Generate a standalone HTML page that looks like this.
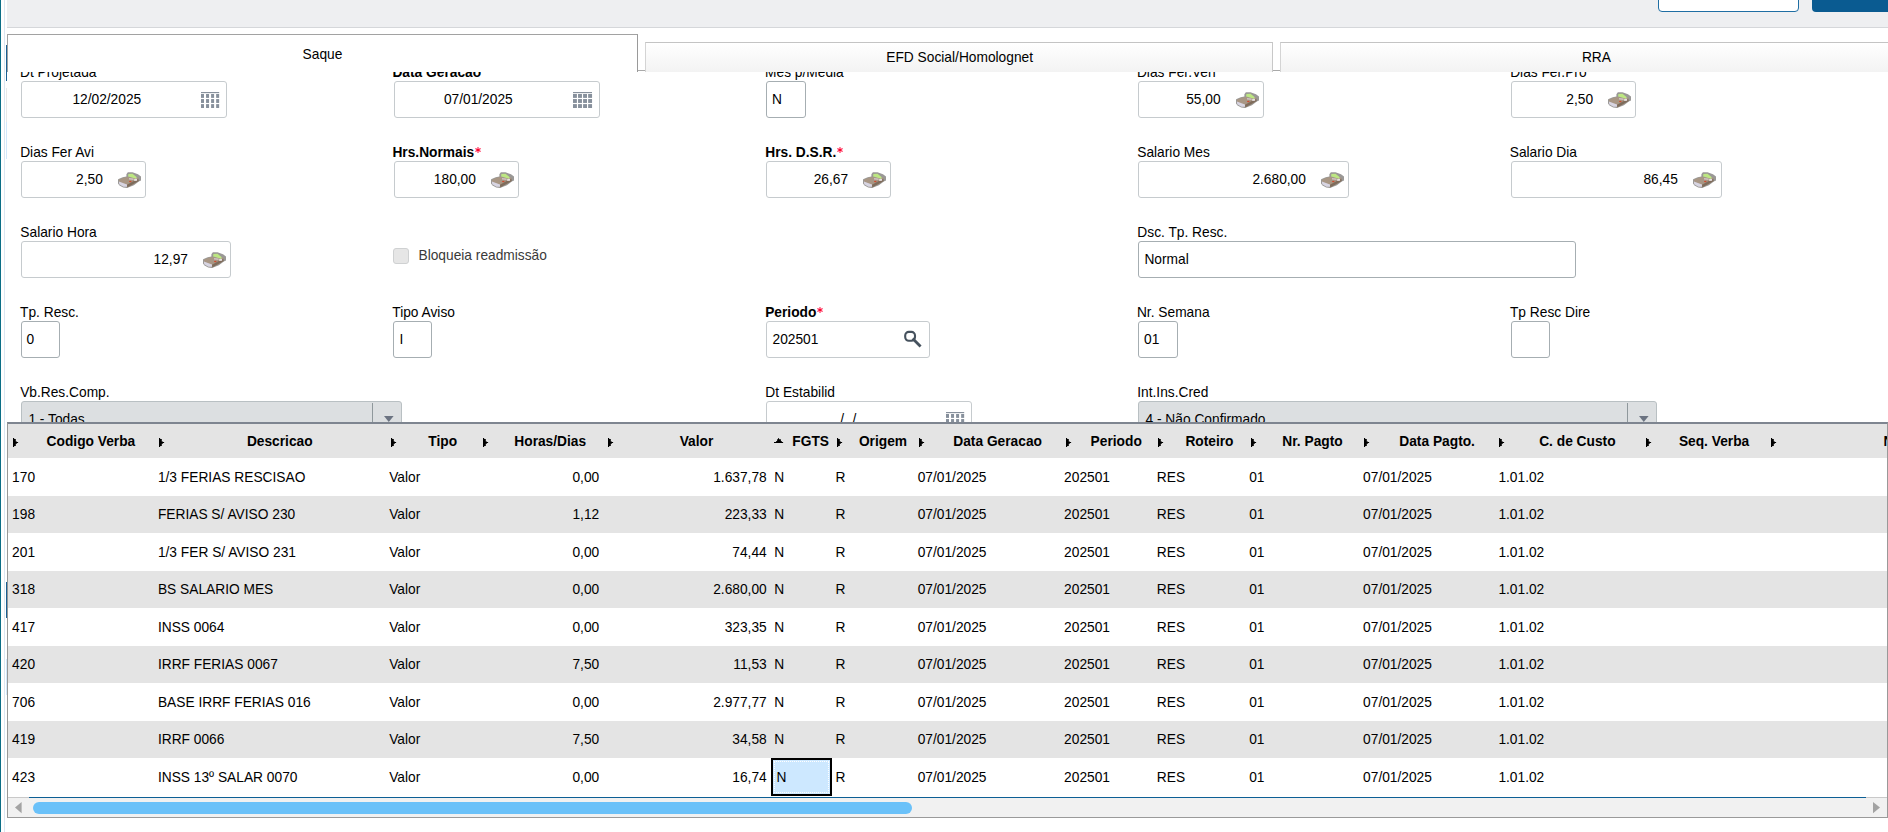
<!DOCTYPE html><html><head><meta charset="utf-8"><style>
html,body{margin:0;padding:0;width:1888px;height:832px;overflow:hidden;background:#fff;position:relative}
body{font-family:"Liberation Sans",sans-serif;font-size:13.75px;color:#000}
.t{position:absolute;white-space:nowrap;line-height:16px;font-size:13.75px}
</style></head><body>
<div style="position:absolute;left:0.00px;top:0.00px;width:1.30px;height:832.00px;box-sizing:border-box;background:#0b6e86"></div>
<div style="position:absolute;left:3.90px;top:0.00px;width:1.20px;height:832.00px;box-sizing:border-box;background:#dbe6f1"></div>
<div style="position:absolute;left:5.80px;top:88.00px;width:1.20px;height:34.00px;box-sizing:border-box;background:#e8e8e8"></div>
<div style="position:absolute;left:5.80px;top:122.00px;width:1.20px;height:36.60px;box-sizing:border-box;background:#d3e8fb"></div>
<div style="position:absolute;left:5.80px;top:582.40px;width:1.20px;height:35.40px;box-sizing:border-box;background:#1b5f93"></div>
<div style="position:absolute;left:5.80px;top:659.00px;width:1.20px;height:36.00px;box-sizing:border-box;background:#d3e8fb"></div>
<div class="t" style="top:65.00px;left:20.05px;">Dt Projetada</div>
<div style="position:absolute;left:21.10px;top:81.20px;width:206.40px;height:36.50px;box-sizing:border-box;border:1px solid #c6cbce;border-radius:3px;background:#fff"></div>
<div class="t" style="top:91.80px;left:72.40px;">12/02/2025</div>
<svg width="20" height="17" viewBox="0 0 20 17" style="position:absolute;left:200.90px;top:91.90px"><rect x="0" y="0" width="18.2" height="1.15" fill="#87909c"/><rect x="0.00" y="2.00" width="3.0" height="3.9" fill="#87909c"/><rect x="5.05" y="2.00" width="3.0" height="3.9" fill="#87909c"/><rect x="10.10" y="2.00" width="3.0" height="3.9" fill="#87909c"/><rect x="15.15" y="2.00" width="3.0" height="3.9" fill="#87909c"/><rect x="0.00" y="7.05" width="3.0" height="3.9" fill="#87909c"/><rect x="5.05" y="7.05" width="3.0" height="3.9" fill="#87909c"/><rect x="10.10" y="7.05" width="3.0" height="3.9" fill="#87909c"/><rect x="15.15" y="7.05" width="3.0" height="3.9" fill="#87909c"/><rect x="0.00" y="12.10" width="3.0" height="3.9" fill="#87909c"/><rect x="5.05" y="12.10" width="3.0" height="3.9" fill="#87909c"/><rect x="10.10" y="12.10" width="3.0" height="3.9" fill="#87909c"/><rect x="15.15" y="12.10" width="3.0" height="3.9" fill="#87909c"/></svg>
<div class="t" style="top:65.00px;left:392.45px;font-weight:bold;">Data Geracao</div>
<div style="position:absolute;left:393.50px;top:81.20px;width:206.50px;height:36.50px;box-sizing:border-box;border:1px solid #c6cbce;border-radius:3px;background:#fff"></div>
<div class="t" style="top:91.80px;left:443.90px;">07/01/2025</div>
<svg width="20" height="17" viewBox="0 0 20 17" style="position:absolute;left:572.90px;top:91.90px"><rect x="0" y="0" width="19.0" height="1.15" fill="#87909c"/><rect x="0.00" y="2.00" width="3.9" height="3.9" fill="#87909c"/><rect x="5.05" y="2.00" width="3.9" height="3.9" fill="#87909c"/><rect x="10.10" y="2.00" width="3.9" height="3.9" fill="#87909c"/><rect x="15.15" y="2.00" width="3.9" height="3.9" fill="#87909c"/><rect x="0.00" y="7.05" width="3.9" height="3.9" fill="#87909c"/><rect x="5.05" y="7.05" width="3.9" height="3.9" fill="#87909c"/><rect x="10.10" y="7.05" width="3.9" height="3.9" fill="#87909c"/><rect x="15.15" y="7.05" width="3.9" height="3.9" fill="#87909c"/><rect x="0.00" y="12.10" width="3.9" height="3.9" fill="#87909c"/><rect x="5.05" y="12.10" width="3.9" height="3.9" fill="#87909c"/><rect x="10.10" y="12.10" width="3.9" height="3.9" fill="#87909c"/><rect x="15.15" y="12.10" width="3.9" height="3.9" fill="#87909c"/></svg>
<div class="t" style="top:65.00px;left:765.05px;">Mes p/Media</div>
<div style="position:absolute;left:766.10px;top:81.20px;width:39.90px;height:36.50px;box-sizing:border-box;border:1.25px solid #a6aeb2;border-radius:3px;background:#fff"></div>
<div class="t" style="top:91.80px;left:771.90px;">N</div>
<div class="t" style="top:65.00px;left:1136.95px;">Dias Fer.Ven</div>
<div style="position:absolute;left:1138.00px;top:81.20px;width:126.00px;height:36.50px;box-sizing:border-box;border:1px solid #c6cbce;border-radius:3px;background:#fff"></div>
<div class="t" style="top:91.80px;right:667.40px;">55,00</div>
<div style="position:absolute;left:1235.80px;top:92.00px;width:23px;height:16px"><svg width="23" height="16" viewBox="0 0 23 16"><path d="M0 7.5 L0 11.6 L1.5 13.6 L5.2 15.6 L9 15.9 L15.9 13.3 L20.8 9.6 L23 8.4 L23 4.4 L20 2.3 L14.5 0.3 L9.85 0.3 L8.4 2.35 L8.4 4.4 L4.7 5.2 L0.6 7 Z" fill="#9a9896"/><path d="M0.9 7.8 L5 6 L9.5 4.8 L12 5.5 L20.5 5.5 L20.2 9 L15.5 12.3 L9 14.8 L1.2 11.3 Z" fill="#a89684"/><path d="M0.9 9.6 L9 12.4 L9 14.8 L5.5 14.8 L1.2 12.2 Z" fill="#d8d5e2"/><path d="M9 12.7 L20.2 6.4 L20.8 9 L9.3 15.6 Z" fill="#7f6c5b"/><path d="M11 6.1 L15.6 6.6 L15.6 8.1 L11 7.6 Z" fill="#cfc3c3"/><path d="M16.2 7 L19.1 6.8 L19.1 8.7 L16.2 9 Z" fill="#e6dfe0"/><path d="M10.4 2.06 L14.5 1.8 L18.8 5.2 L17.9 6.7 L12.2 5 L10.1 4.4 Z" fill="#bde782"/><ellipse cx="12.3" cy="9.5" rx="1.3" ry="0.65" fill="#cf4a2f"/></svg></div>
<div class="t" style="top:65.00px;left:1510.15px;">Dias Fer.Pro</div>
<div style="position:absolute;left:1511.20px;top:81.20px;width:124.80px;height:36.50px;box-sizing:border-box;border:1px solid #c6cbce;border-radius:3px;background:#fff"></div>
<div class="t" style="top:91.80px;right:294.90px;">2,50</div>
<div style="position:absolute;left:1608.30px;top:92.00px;width:23px;height:16px"><svg width="23" height="16" viewBox="0 0 23 16"><path d="M0 7.5 L0 11.6 L1.5 13.6 L5.2 15.6 L9 15.9 L15.9 13.3 L20.8 9.6 L23 8.4 L23 4.4 L20 2.3 L14.5 0.3 L9.85 0.3 L8.4 2.35 L8.4 4.4 L4.7 5.2 L0.6 7 Z" fill="#9a9896"/><path d="M0.9 7.8 L5 6 L9.5 4.8 L12 5.5 L20.5 5.5 L20.2 9 L15.5 12.3 L9 14.8 L1.2 11.3 Z" fill="#a89684"/><path d="M0.9 9.6 L9 12.4 L9 14.8 L5.5 14.8 L1.2 12.2 Z" fill="#d8d5e2"/><path d="M9 12.7 L20.2 6.4 L20.8 9 L9.3 15.6 Z" fill="#7f6c5b"/><path d="M11 6.1 L15.6 6.6 L15.6 8.1 L11 7.6 Z" fill="#cfc3c3"/><path d="M16.2 7 L19.1 6.8 L19.1 8.7 L16.2 9 Z" fill="#e6dfe0"/><path d="M10.4 2.06 L14.5 1.8 L18.8 5.2 L17.9 6.7 L12.2 5 L10.1 4.4 Z" fill="#bde782"/><ellipse cx="12.3" cy="9.5" rx="1.3" ry="0.65" fill="#cf4a2f"/></svg></div>
<div class="t" style="top:145.10px;left:20.15px;">Dias Fer Avi</div>
<div style="position:absolute;left:21.20px;top:161.30px;width:125.20px;height:36.50px;box-sizing:border-box;border:1px solid #c6cbce;border-radius:3px;background:#fff"></div>
<div class="t" style="top:171.90px;right:1785.20px;">2,50</div>
<div style="position:absolute;left:118.00px;top:172.10px;width:23px;height:16px"><svg width="23" height="16" viewBox="0 0 23 16"><path d="M0 7.5 L0 11.6 L1.5 13.6 L5.2 15.6 L9 15.9 L15.9 13.3 L20.8 9.6 L23 8.4 L23 4.4 L20 2.3 L14.5 0.3 L9.85 0.3 L8.4 2.35 L8.4 4.4 L4.7 5.2 L0.6 7 Z" fill="#9a9896"/><path d="M0.9 7.8 L5 6 L9.5 4.8 L12 5.5 L20.5 5.5 L20.2 9 L15.5 12.3 L9 14.8 L1.2 11.3 Z" fill="#a89684"/><path d="M0.9 9.6 L9 12.4 L9 14.8 L5.5 14.8 L1.2 12.2 Z" fill="#d8d5e2"/><path d="M9 12.7 L20.2 6.4 L20.8 9 L9.3 15.6 Z" fill="#7f6c5b"/><path d="M11 6.1 L15.6 6.6 L15.6 8.1 L11 7.6 Z" fill="#cfc3c3"/><path d="M16.2 7 L19.1 6.8 L19.1 8.7 L16.2 9 Z" fill="#e6dfe0"/><path d="M10.4 2.06 L14.5 1.8 L18.8 5.2 L17.9 6.7 L12.2 5 L10.1 4.4 Z" fill="#bde782"/><ellipse cx="12.3" cy="9.5" rx="1.3" ry="0.65" fill="#cf4a2f"/></svg></div>
<div class="t" style="top:145.10px;left:392.45px;font-weight:bold;">Hrs.Normais</div>
<svg width="10" height="10" viewBox="-5 -5 10 10" style="position:absolute;left:472.90px;top:145.40px"><g stroke="#ff1848" stroke-width="1.1" stroke-linecap="round"><path d="M0 -2.45 L0 2.45"/><path d="M2.2 -1.3 L-2.2 1.3"/><path d="M2.2 1.3 L-2.2 -1.3"/></g><circle r="1" fill="#ff0022"/></svg>
<div style="position:absolute;left:393.50px;top:161.30px;width:125.10px;height:36.50px;box-sizing:border-box;border:1px solid #c6cbce;border-radius:3px;background:#fff"></div>
<div class="t" style="top:171.90px;right:1412.10px;">180,00</div>
<div style="position:absolute;left:491.10px;top:172.10px;width:23px;height:16px"><svg width="23" height="16" viewBox="0 0 23 16"><path d="M0 7.5 L0 11.6 L1.5 13.6 L5.2 15.6 L9 15.9 L15.9 13.3 L20.8 9.6 L23 8.4 L23 4.4 L20 2.3 L14.5 0.3 L9.85 0.3 L8.4 2.35 L8.4 4.4 L4.7 5.2 L0.6 7 Z" fill="#9a9896"/><path d="M0.9 7.8 L5 6 L9.5 4.8 L12 5.5 L20.5 5.5 L20.2 9 L15.5 12.3 L9 14.8 L1.2 11.3 Z" fill="#a89684"/><path d="M0.9 9.6 L9 12.4 L9 14.8 L5.5 14.8 L1.2 12.2 Z" fill="#d8d5e2"/><path d="M9 12.7 L20.2 6.4 L20.8 9 L9.3 15.6 Z" fill="#7f6c5b"/><path d="M11 6.1 L15.6 6.6 L15.6 8.1 L11 7.6 Z" fill="#cfc3c3"/><path d="M16.2 7 L19.1 6.8 L19.1 8.7 L16.2 9 Z" fill="#e6dfe0"/><path d="M10.4 2.06 L14.5 1.8 L18.8 5.2 L17.9 6.7 L12.2 5 L10.1 4.4 Z" fill="#bde782"/><ellipse cx="12.3" cy="9.5" rx="1.3" ry="0.65" fill="#cf4a2f"/></svg></div>
<div class="t" style="top:145.10px;left:765.25px;font-weight:bold;">Hrs. D.S.R.</div>
<svg width="10" height="10" viewBox="-5 -5 10 10" style="position:absolute;left:835.10px;top:145.20px"><g stroke="#ff1848" stroke-width="1.1" stroke-linecap="round"><path d="M0 -2.45 L0 2.45"/><path d="M2.2 -1.3 L-2.2 1.3"/><path d="M2.2 1.3 L-2.2 -1.3"/></g><circle r="1" fill="#ff0022"/></svg>
<div style="position:absolute;left:766.30px;top:161.30px;width:125.00px;height:36.50px;box-sizing:border-box;border:1px solid #c6cbce;border-radius:3px;background:#fff"></div>
<div class="t" style="top:171.90px;right:1039.90px;">26,67</div>
<div style="position:absolute;left:863.30px;top:172.10px;width:23px;height:16px"><svg width="23" height="16" viewBox="0 0 23 16"><path d="M0 7.5 L0 11.6 L1.5 13.6 L5.2 15.6 L9 15.9 L15.9 13.3 L20.8 9.6 L23 8.4 L23 4.4 L20 2.3 L14.5 0.3 L9.85 0.3 L8.4 2.35 L8.4 4.4 L4.7 5.2 L0.6 7 Z" fill="#9a9896"/><path d="M0.9 7.8 L5 6 L9.5 4.8 L12 5.5 L20.5 5.5 L20.2 9 L15.5 12.3 L9 14.8 L1.2 11.3 Z" fill="#a89684"/><path d="M0.9 9.6 L9 12.4 L9 14.8 L5.5 14.8 L1.2 12.2 Z" fill="#d8d5e2"/><path d="M9 12.7 L20.2 6.4 L20.8 9 L9.3 15.6 Z" fill="#7f6c5b"/><path d="M11 6.1 L15.6 6.6 L15.6 8.1 L11 7.6 Z" fill="#cfc3c3"/><path d="M16.2 7 L19.1 6.8 L19.1 8.7 L16.2 9 Z" fill="#e6dfe0"/><path d="M10.4 2.06 L14.5 1.8 L18.8 5.2 L17.9 6.7 L12.2 5 L10.1 4.4 Z" fill="#bde782"/><ellipse cx="12.3" cy="9.5" rx="1.3" ry="0.65" fill="#cf4a2f"/></svg></div>
<div class="t" style="top:145.10px;left:1137.25px;">Salario Mes</div>
<div style="position:absolute;left:1138.30px;top:161.30px;width:210.70px;height:36.50px;box-sizing:border-box;border:1px solid #c6cbce;border-radius:3px;background:#fff"></div>
<div class="t" style="top:171.90px;right:582.10px;">2.680,00</div>
<div style="position:absolute;left:1321.10px;top:172.10px;width:23px;height:16px"><svg width="23" height="16" viewBox="0 0 23 16"><path d="M0 7.5 L0 11.6 L1.5 13.6 L5.2 15.6 L9 15.9 L15.9 13.3 L20.8 9.6 L23 8.4 L23 4.4 L20 2.3 L14.5 0.3 L9.85 0.3 L8.4 2.35 L8.4 4.4 L4.7 5.2 L0.6 7 Z" fill="#9a9896"/><path d="M0.9 7.8 L5 6 L9.5 4.8 L12 5.5 L20.5 5.5 L20.2 9 L15.5 12.3 L9 14.8 L1.2 11.3 Z" fill="#a89684"/><path d="M0.9 9.6 L9 12.4 L9 14.8 L5.5 14.8 L1.2 12.2 Z" fill="#d8d5e2"/><path d="M9 12.7 L20.2 6.4 L20.8 9 L9.3 15.6 Z" fill="#7f6c5b"/><path d="M11 6.1 L15.6 6.6 L15.6 8.1 L11 7.6 Z" fill="#cfc3c3"/><path d="M16.2 7 L19.1 6.8 L19.1 8.7 L16.2 9 Z" fill="#e6dfe0"/><path d="M10.4 2.06 L14.5 1.8 L18.8 5.2 L17.9 6.7 L12.2 5 L10.1 4.4 Z" fill="#bde782"/><ellipse cx="12.3" cy="9.5" rx="1.3" ry="0.65" fill="#cf4a2f"/></svg></div>
<div class="t" style="top:145.10px;left:1509.75px;">Salario Dia</div>
<div style="position:absolute;left:1510.80px;top:161.30px;width:211.00px;height:36.50px;box-sizing:border-box;border:1px solid #c6cbce;border-radius:3px;background:#fff"></div>
<div class="t" style="top:171.90px;right:210.20px;">86,45</div>
<div style="position:absolute;left:1693.00px;top:172.10px;width:23px;height:16px"><svg width="23" height="16" viewBox="0 0 23 16"><path d="M0 7.5 L0 11.6 L1.5 13.6 L5.2 15.6 L9 15.9 L15.9 13.3 L20.8 9.6 L23 8.4 L23 4.4 L20 2.3 L14.5 0.3 L9.85 0.3 L8.4 2.35 L8.4 4.4 L4.7 5.2 L0.6 7 Z" fill="#9a9896"/><path d="M0.9 7.8 L5 6 L9.5 4.8 L12 5.5 L20.5 5.5 L20.2 9 L15.5 12.3 L9 14.8 L1.2 11.3 Z" fill="#a89684"/><path d="M0.9 9.6 L9 12.4 L9 14.8 L5.5 14.8 L1.2 12.2 Z" fill="#d8d5e2"/><path d="M9 12.7 L20.2 6.4 L20.8 9 L9.3 15.6 Z" fill="#7f6c5b"/><path d="M11 6.1 L15.6 6.6 L15.6 8.1 L11 7.6 Z" fill="#cfc3c3"/><path d="M16.2 7 L19.1 6.8 L19.1 8.7 L16.2 9 Z" fill="#e6dfe0"/><path d="M10.4 2.06 L14.5 1.8 L18.8 5.2 L17.9 6.7 L12.2 5 L10.1 4.4 Z" fill="#bde782"/><ellipse cx="12.3" cy="9.5" rx="1.3" ry="0.65" fill="#cf4a2f"/></svg></div>
<div class="t" style="top:225.10px;left:20.35px;">Salario Hora</div>
<div style="position:absolute;left:21.40px;top:241.30px;width:209.70px;height:36.50px;box-sizing:border-box;border:1px solid #c6cbce;border-radius:3px;background:#fff"></div>
<div class="t" style="top:251.90px;right:1700.00px;">12,97</div>
<div style="position:absolute;left:203.20px;top:252.10px;width:23px;height:16px"><svg width="23" height="16" viewBox="0 0 23 16"><path d="M0 7.5 L0 11.6 L1.5 13.6 L5.2 15.6 L9 15.9 L15.9 13.3 L20.8 9.6 L23 8.4 L23 4.4 L20 2.3 L14.5 0.3 L9.85 0.3 L8.4 2.35 L8.4 4.4 L4.7 5.2 L0.6 7 Z" fill="#9a9896"/><path d="M0.9 7.8 L5 6 L9.5 4.8 L12 5.5 L20.5 5.5 L20.2 9 L15.5 12.3 L9 14.8 L1.2 11.3 Z" fill="#a89684"/><path d="M0.9 9.6 L9 12.4 L9 14.8 L5.5 14.8 L1.2 12.2 Z" fill="#d8d5e2"/><path d="M9 12.7 L20.2 6.4 L20.8 9 L9.3 15.6 Z" fill="#7f6c5b"/><path d="M11 6.1 L15.6 6.6 L15.6 8.1 L11 7.6 Z" fill="#cfc3c3"/><path d="M16.2 7 L19.1 6.8 L19.1 8.7 L16.2 9 Z" fill="#e6dfe0"/><path d="M10.4 2.06 L14.5 1.8 L18.8 5.2 L17.9 6.7 L12.2 5 L10.1 4.4 Z" fill="#bde782"/><ellipse cx="12.3" cy="9.5" rx="1.3" ry="0.65" fill="#cf4a2f"/></svg></div>
<div style="position:absolute;left:393.20px;top:248.20px;width:15.80px;height:15.80px;box-sizing:border-box;border:1px solid #cfd1d2;border-radius:3px;background:#e6e6e6"></div>
<div class="t" style="top:248.00px;left:418.50px;color:#3a3a3a;">Bloqueia readmissão</div>
<div class="t" style="top:225.10px;left:1137.35px;">Dsc. Tp. Resc.</div>
<div style="position:absolute;left:1138.40px;top:241.30px;width:437.40px;height:36.50px;box-sizing:border-box;border:1.25px solid #a6aeb2;border-radius:3px;background:#fff"></div>
<div class="t" style="top:251.90px;left:1144.40px;">Normal</div>
<div class="t" style="top:305.10px;left:20.05px;">Tp. Resc.</div>
<div style="position:absolute;left:21.10px;top:321.30px;width:39.10px;height:36.50px;box-sizing:border-box;border:1.25px solid #a6aeb2;border-radius:3px;background:#fff"></div>
<div class="t" style="top:331.90px;left:26.60px;">0</div>
<div class="t" style="top:305.10px;left:392.25px;">Tipo Aviso</div>
<div style="position:absolute;left:393.30px;top:321.30px;width:39.20px;height:36.50px;box-sizing:border-box;border:1.25px solid #a6aeb2;border-radius:3px;background:#fff"></div>
<div class="t" style="top:331.90px;left:399.50px;">I</div>
<div class="t" style="top:305.10px;left:765.15px;font-weight:bold;">Periodo</div>
<svg width="10" height="10" viewBox="-5 -5 10 10" style="position:absolute;left:815.20px;top:305.10px"><g stroke="#ff1848" stroke-width="1.1" stroke-linecap="round"><path d="M0 -2.45 L0 2.45"/><path d="M2.2 -1.3 L-2.2 1.3"/><path d="M2.2 1.3 L-2.2 -1.3"/></g><circle r="1" fill="#ff0022"/></svg>
<div style="position:absolute;left:766.20px;top:321.30px;width:163.70px;height:36.50px;box-sizing:border-box;border:1px solid #c6cbce;border-radius:3px;background:#fff"></div>
<div class="t" style="top:331.90px;left:772.50px;">202501</div>
<svg width="26" height="26" viewBox="0 0 26 26" style="position:absolute;left:900px;top:326px"><rect x="5.2" y="5.9" width="9.8" height="8.8" rx="3.6" fill="none" stroke="#46525e" stroke-width="2.1"/><path d="M13.6 13.4 L19.6 19.5" stroke="#46525e" stroke-width="2.8" stroke-linecap="square"/></svg>
<div class="t" style="top:305.10px;left:1136.95px;">Nr. Semana</div>
<div style="position:absolute;left:1138.00px;top:321.30px;width:39.50px;height:36.50px;box-sizing:border-box;border:1.25px solid #a6aeb2;border-radius:3px;background:#fff"></div>
<div class="t" style="top:331.90px;left:1144.00px;">01</div>
<div class="t" style="top:305.10px;left:1509.95px;">Tp Resc Dire</div>
<div style="position:absolute;left:1511.00px;top:321.30px;width:39.00px;height:36.50px;box-sizing:border-box;border:1.25px solid #a6aeb2;border-radius:3px;background:#fff"></div>
<div class="t" style="top:385.20px;left:20.15px;">Vb.Res.Comp.</div>
<div style="position:absolute;left:21.20px;top:401.40px;width:380.50px;height:36.50px;box-sizing:border-box;border:1.25px solid #b9c0c3;border-radius:3px;background:#dcdfe1"></div>
<div style="position:absolute;left:372.00px;top:403.40px;width:1.25px;height:34.50px;box-sizing:border-box;background:#8f989c"></div>
<div class="t" style="top:412.00px;left:28.40px;">1 - Todas</div>
<svg width="10" height="6" style="position:absolute;left:384.20px;top:416.20px"><path d="M0 0 L9.6 0 L4.8 6 Z" fill="#6b7381"/></svg>
<div class="t" style="top:385.20px;left:765.35px;">Dt Estabilid</div>
<div style="position:absolute;left:766.40px;top:401.40px;width:205.70px;height:36.50px;box-sizing:border-box;border:1px solid #c6cbce;border-radius:3px;background:#fff"></div>
<svg width="20" height="17" viewBox="0 0 20 17" style="position:absolute;left:945.90px;top:412.10px"><rect x="0" y="0" width="18.2" height="1.15" fill="#87909c"/><rect x="0.00" y="2.00" width="3.0" height="3.9" fill="#87909c"/><rect x="5.05" y="2.00" width="3.0" height="3.9" fill="#87909c"/><rect x="10.10" y="2.00" width="3.0" height="3.9" fill="#87909c"/><rect x="15.15" y="2.00" width="3.0" height="3.9" fill="#87909c"/><rect x="0.00" y="7.05" width="3.0" height="3.9" fill="#87909c"/><rect x="5.05" y="7.05" width="3.0" height="3.9" fill="#87909c"/><rect x="10.10" y="7.05" width="3.0" height="3.9" fill="#87909c"/><rect x="15.15" y="7.05" width="3.0" height="3.9" fill="#87909c"/><rect x="0.00" y="12.10" width="3.0" height="3.9" fill="#87909c"/><rect x="5.05" y="12.10" width="3.0" height="3.9" fill="#87909c"/><rect x="10.10" y="12.10" width="3.0" height="3.9" fill="#87909c"/><rect x="15.15" y="12.10" width="3.0" height="3.9" fill="#87909c"/></svg>
<div class="t" style="top:412.00px;left:840.30px;">/</div>
<div class="t" style="top:412.00px;left:852.40px;">/</div>
<div class="t" style="top:385.20px;left:1137.25px;">Int.Ins.Cred</div>
<div style="position:absolute;left:1138.30px;top:401.40px;width:518.30px;height:36.50px;box-sizing:border-box;border:1.25px solid #b9c0c3;border-radius:3px;background:#dcdfe1"></div>
<div style="position:absolute;left:1626.80px;top:403.40px;width:1.25px;height:34.50px;box-sizing:border-box;background:#8f989c"></div>
<div class="t" style="top:412.00px;left:1145.50px;">4 - Não Confirmado</div>
<svg width="10" height="6" style="position:absolute;left:1639.10px;top:416.20px"><path d="M0 0 L9.6 0 L4.8 6 Z" fill="#6b7381"/></svg>
<div style="position:absolute;left:7.00px;top:0.00px;width:1881.00px;height:27.50px;box-sizing:border-box;background:#eeeff1;border-bottom:1px solid #d5d7da"></div>
<div style="position:absolute;left:1658.00px;top:-10.00px;width:141.00px;height:21.80px;box-sizing:border-box;background:#fff;border:1.4px solid #1f6ea3;border-radius:4px"></div>
<div style="position:absolute;left:1812.00px;top:-10.00px;width:88.00px;height:21.80px;box-sizing:border-box;background:#0a5b91;border-radius:4px"></div>
<div style="position:absolute;left:7.00px;top:27.50px;width:1881.00px;height:44.90px;box-sizing:border-box;background:#fff"></div>
<div style="position:absolute;left:637.00px;top:70.00px;width:9.50px;height:1.40px;box-sizing:border-box;background:#a9a9a9"></div>
<div style="position:absolute;left:1272.00px;top:70.00px;width:9.50px;height:1.40px;box-sizing:border-box;background:#a9a9a9"></div>
<div style="position:absolute;left:5.80px;top:45.00px;width:1.20px;height:35.50px;box-sizing:border-box;background:#1b5f93"></div>
<div style="position:absolute;left:7.00px;top:34.00px;width:631.20px;height:38.40px;box-sizing:border-box;background:#fff;border-top:1.6px solid #a2a2a2;border-left:1.2px solid #a2a2a2;border-right:1.3px solid #9a9a9a"></div>
<div style="position:absolute;left:645.40px;top:41.70px;width:627.80px;height:30.70px;box-sizing:border-box;background:linear-gradient(#ffffff,#f3f3f3);border-top:1.3px solid #c4c4c4;border-left:1.4px solid #d4d4d4;border-right:1.3px solid #c8c8c8"></div>
<div style="position:absolute;left:1280.40px;top:41.70px;width:607.60px;height:30.70px;box-sizing:border-box;background:linear-gradient(#ffffff,#f3f3f3);border-top:1.3px solid #c4c4c4;border-left:1.4px solid #d4d4d4"></div>
<div class="t" style="top:46.90px;left:302.60px;">Saque</div>
<div class="t" style="top:50.00px;left:886.30px;">EFD Social/Homolognet</div>
<div class="t" style="top:49.80px;left:1581.90px;">RRA</div>
<div style="position:absolute;left:7.20px;top:422.00px;width:1880.80px;height:396.00px;box-sizing:border-box;background:#fff;border-left:1.2px solid #979797;border-right:1.2px solid #999;border-top:2px solid #7e8590;border-bottom:1.3px solid #9a9a9a"></div>
<div style="position:absolute;left:8.40px;top:424.00px;width:1878.40px;height:34.00px;box-sizing:border-box;background:#e4e4e4"></div>
<div style="position:absolute;left:8.40px;top:495.50px;width:1878.40px;height:37.50px;box-sizing:border-box;background:#e4e4e4"></div>
<div style="position:absolute;left:8.40px;top:570.50px;width:1878.40px;height:37.50px;box-sizing:border-box;background:#e4e4e4"></div>
<div style="position:absolute;left:8.40px;top:645.50px;width:1878.40px;height:37.50px;box-sizing:border-box;background:#e4e4e4"></div>
<div style="position:absolute;left:8.40px;top:720.50px;width:1878.40px;height:37.50px;box-sizing:border-box;background:#e4e4e4"></div>
<div class="t" style="top:433.60px;left:46.60px;font-weight:bold;">Codigo Verba</div>
<div class="t" style="top:433.60px;left:246.90px;font-weight:bold;">Descricao</div>
<div class="t" style="top:433.60px;left:428.30px;font-weight:bold;">Tipo</div>
<div class="t" style="top:433.60px;left:514.30px;font-weight:bold;">Horas/Dias</div>
<div class="t" style="top:433.60px;left:679.70px;font-weight:bold;">Valor</div>
<div class="t" style="top:433.60px;left:792.30px;font-weight:bold;">FGTS</div>
<div class="t" style="top:433.60px;left:858.90px;font-weight:bold;">Origem</div>
<div class="t" style="top:433.60px;left:953.30px;font-weight:bold;">Data Geracao</div>
<div class="t" style="top:433.60px;left:1090.60px;font-weight:bold;">Periodo</div>
<div class="t" style="top:433.60px;left:1185.40px;font-weight:bold;">Roteiro</div>
<div class="t" style="top:433.60px;left:1282.30px;font-weight:bold;">Nr. Pagto</div>
<div class="t" style="top:433.60px;left:1399.30px;font-weight:bold;">Data Pagto.</div>
<div class="t" style="top:433.60px;left:1539.20px;font-weight:bold;">C. de Custo</div>
<div class="t" style="top:433.60px;left:1678.90px;font-weight:bold;">Seq. Verba</div>
<div class="t" style="top:433.60px;left:1883.60px;font-weight:bold;">N</div>
<svg width="6" height="10" viewBox="0 0 6 10" style="position:absolute;left:13.10px;top:437.9px"><path d="M0 0 L1.1 0 L1.2 1.1 L2.8 1.1 L2.8 3.4 L3.9 3.5 L3.9 4.1 L5.1 4.1 L5.1 5.1 L3.9 5.1 L3.9 5.7 L2.8 5.8 L2.8 7.9 L1.2 7.9 L1.1 8.9 L0 8.9 Z" fill="#000"/></svg>
<svg width="6" height="10" viewBox="0 0 6 10" style="position:absolute;left:158.80px;top:437.9px"><path d="M0 0 L1.1 0 L1.2 1.1 L2.8 1.1 L2.8 3.4 L3.9 3.5 L3.9 4.1 L5.1 4.1 L5.1 5.1 L3.9 5.1 L3.9 5.7 L2.8 5.8 L2.8 7.9 L1.2 7.9 L1.1 8.9 L0 8.9 Z" fill="#000"/></svg>
<svg width="6" height="10" viewBox="0 0 6 10" style="position:absolute;left:390.60px;top:437.9px"><path d="M0 0 L1.1 0 L1.2 1.1 L2.8 1.1 L2.8 3.4 L3.9 3.5 L3.9 4.1 L5.1 4.1 L5.1 5.1 L3.9 5.1 L3.9 5.7 L2.8 5.8 L2.8 7.9 L1.2 7.9 L1.1 8.9 L0 8.9 Z" fill="#000"/></svg>
<svg width="6" height="10" viewBox="0 0 6 10" style="position:absolute;left:483.30px;top:437.9px"><path d="M0 0 L1.1 0 L1.2 1.1 L2.8 1.1 L2.8 3.4 L3.9 3.5 L3.9 4.1 L5.1 4.1 L5.1 5.1 L3.9 5.1 L3.9 5.7 L2.8 5.8 L2.8 7.9 L1.2 7.9 L1.1 8.9 L0 8.9 Z" fill="#000"/></svg>
<svg width="6" height="10" viewBox="0 0 6 10" style="position:absolute;left:607.60px;top:437.9px"><path d="M0 0 L1.1 0 L1.2 1.1 L2.8 1.1 L2.8 3.4 L3.9 3.5 L3.9 4.1 L5.1 4.1 L5.1 5.1 L3.9 5.1 L3.9 5.7 L2.8 5.8 L2.8 7.9 L1.2 7.9 L1.1 8.9 L0 8.9 Z" fill="#000"/></svg>
<svg width="6" height="10" viewBox="0 0 6 10" style="position:absolute;left:836.70px;top:437.9px"><path d="M0 0 L1.1 0 L1.2 1.1 L2.8 1.1 L2.8 3.4 L3.9 3.5 L3.9 4.1 L5.1 4.1 L5.1 5.1 L3.9 5.1 L3.9 5.7 L2.8 5.8 L2.8 7.9 L1.2 7.9 L1.1 8.9 L0 8.9 Z" fill="#000"/></svg>
<svg width="6" height="10" viewBox="0 0 6 10" style="position:absolute;left:918.90px;top:437.9px"><path d="M0 0 L1.1 0 L1.2 1.1 L2.8 1.1 L2.8 3.4 L3.9 3.5 L3.9 4.1 L5.1 4.1 L5.1 5.1 L3.9 5.1 L3.9 5.7 L2.8 5.8 L2.8 7.9 L1.2 7.9 L1.1 8.9 L0 8.9 Z" fill="#000"/></svg>
<svg width="6" height="10" viewBox="0 0 6 10" style="position:absolute;left:1065.90px;top:437.9px"><path d="M0 0 L1.1 0 L1.2 1.1 L2.8 1.1 L2.8 3.4 L3.9 3.5 L3.9 4.1 L5.1 4.1 L5.1 5.1 L3.9 5.1 L3.9 5.7 L2.8 5.8 L2.8 7.9 L1.2 7.9 L1.1 8.9 L0 8.9 Z" fill="#000"/></svg>
<svg width="6" height="10" viewBox="0 0 6 10" style="position:absolute;left:1157.90px;top:437.9px"><path d="M0 0 L1.1 0 L1.2 1.1 L2.8 1.1 L2.8 3.4 L3.9 3.5 L3.9 4.1 L5.1 4.1 L5.1 5.1 L3.9 5.1 L3.9 5.7 L2.8 5.8 L2.8 7.9 L1.2 7.9 L1.1 8.9 L0 8.9 Z" fill="#000"/></svg>
<svg width="6" height="10" viewBox="0 0 6 10" style="position:absolute;left:1251.00px;top:437.9px"><path d="M0 0 L1.1 0 L1.2 1.1 L2.8 1.1 L2.8 3.4 L3.9 3.5 L3.9 4.1 L5.1 4.1 L5.1 5.1 L3.9 5.1 L3.9 5.7 L2.8 5.8 L2.8 7.9 L1.2 7.9 L1.1 8.9 L0 8.9 Z" fill="#000"/></svg>
<svg width="6" height="10" viewBox="0 0 6 10" style="position:absolute;left:1364.20px;top:437.9px"><path d="M0 0 L1.1 0 L1.2 1.1 L2.8 1.1 L2.8 3.4 L3.9 3.5 L3.9 4.1 L5.1 4.1 L5.1 5.1 L3.9 5.1 L3.9 5.7 L2.8 5.8 L2.8 7.9 L1.2 7.9 L1.1 8.9 L0 8.9 Z" fill="#000"/></svg>
<svg width="6" height="10" viewBox="0 0 6 10" style="position:absolute;left:1498.60px;top:437.9px"><path d="M0 0 L1.1 0 L1.2 1.1 L2.8 1.1 L2.8 3.4 L3.9 3.5 L3.9 4.1 L5.1 4.1 L5.1 5.1 L3.9 5.1 L3.9 5.7 L2.8 5.8 L2.8 7.9 L1.2 7.9 L1.1 8.9 L0 8.9 Z" fill="#000"/></svg>
<svg width="6" height="10" viewBox="0 0 6 10" style="position:absolute;left:1646.10px;top:437.9px"><path d="M0 0 L1.1 0 L1.2 1.1 L2.8 1.1 L2.8 3.4 L3.9 3.5 L3.9 4.1 L5.1 4.1 L5.1 5.1 L3.9 5.1 L3.9 5.7 L2.8 5.8 L2.8 7.9 L1.2 7.9 L1.1 8.9 L0 8.9 Z" fill="#000"/></svg>
<svg width="6" height="10" viewBox="0 0 6 10" style="position:absolute;left:1770.80px;top:437.9px"><path d="M0 0 L1.1 0 L1.2 1.1 L2.8 1.1 L2.8 3.4 L3.9 3.5 L3.9 4.1 L5.1 4.1 L5.1 5.1 L3.9 5.1 L3.9 5.7 L2.8 5.8 L2.8 7.9 L1.2 7.9 L1.1 8.9 L0 8.9 Z" fill="#000"/></svg>
<svg width="10" height="6" viewBox="0 0 10 6" style="position:absolute;left:774px;top:437.9px"><path d="M0 3.9 L1.9 3.9 L2.4 3.1 L3.1 3.1 L3.1 1.2 L4.0 1.2 L4.3 0 L4.9 0 L5.2 1.2 L6.9 1.2 L6.9 3.1 L7.5 3.1 L8.0 3.9 L9.1 3.9 L9.1 5 L0 5 Z" fill="#000"/></svg>
<div style="position:absolute;left:771.20px;top:758.00px;width:60.40px;height:37.50px;box-sizing:border-box;border:2.5px solid #000;background:#cde8ff"></div>
<div style="position:absolute;left:773.90px;top:760.70px;width:55.10px;height:32.10px;box-sizing:border-box;border:1px dotted #ffffff"></div>
<div class="t" style="top:469.90px;left:12.10px;">170</div>
<div class="t" style="top:469.90px;left:157.90px;">1/3 FERIAS RESCISAO</div>
<div class="t" style="top:469.90px;left:389.20px;">Valor</div>
<div class="t" style="top:469.90px;right:1288.80px;">0,00</div>
<div class="t" style="top:469.90px;right:1121.30px;">1.637,78</div>
<div class="t" style="top:469.90px;left:774.30px;">N</div>
<div class="t" style="top:469.90px;left:835.40px;">R</div>
<div class="t" style="top:469.90px;left:917.70px;">07/01/2025</div>
<div class="t" style="top:469.90px;left:1064.10px;">202501</div>
<div class="t" style="top:469.90px;left:1156.80px;">RES</div>
<div class="t" style="top:469.90px;left:1249.20px;">01</div>
<div class="t" style="top:469.90px;left:1363.10px;">07/01/2025</div>
<div class="t" style="top:469.90px;left:1498.40px;">1.01.02</div>
<div class="t" style="top:507.40px;left:12.10px;">198</div>
<div class="t" style="top:507.40px;left:157.90px;">FERIAS S/ AVISO 230</div>
<div class="t" style="top:507.40px;left:389.20px;">Valor</div>
<div class="t" style="top:507.40px;right:1288.80px;">1,12</div>
<div class="t" style="top:507.40px;right:1121.30px;">223,33</div>
<div class="t" style="top:507.40px;left:774.30px;">N</div>
<div class="t" style="top:507.40px;left:835.40px;">R</div>
<div class="t" style="top:507.40px;left:917.70px;">07/01/2025</div>
<div class="t" style="top:507.40px;left:1064.10px;">202501</div>
<div class="t" style="top:507.40px;left:1156.80px;">RES</div>
<div class="t" style="top:507.40px;left:1249.20px;">01</div>
<div class="t" style="top:507.40px;left:1363.10px;">07/01/2025</div>
<div class="t" style="top:507.40px;left:1498.40px;">1.01.02</div>
<div class="t" style="top:544.90px;left:12.10px;">201</div>
<div class="t" style="top:544.90px;left:157.90px;">1/3 FER S/ AVISO 231</div>
<div class="t" style="top:544.90px;left:389.20px;">Valor</div>
<div class="t" style="top:544.90px;right:1288.80px;">0,00</div>
<div class="t" style="top:544.90px;right:1121.30px;">74,44</div>
<div class="t" style="top:544.90px;left:774.30px;">N</div>
<div class="t" style="top:544.90px;left:835.40px;">R</div>
<div class="t" style="top:544.90px;left:917.70px;">07/01/2025</div>
<div class="t" style="top:544.90px;left:1064.10px;">202501</div>
<div class="t" style="top:544.90px;left:1156.80px;">RES</div>
<div class="t" style="top:544.90px;left:1249.20px;">01</div>
<div class="t" style="top:544.90px;left:1363.10px;">07/01/2025</div>
<div class="t" style="top:544.90px;left:1498.40px;">1.01.02</div>
<div class="t" style="top:582.40px;left:12.10px;">318</div>
<div class="t" style="top:582.40px;left:157.90px;">BS SALARIO MES</div>
<div class="t" style="top:582.40px;left:389.20px;">Valor</div>
<div class="t" style="top:582.40px;right:1288.80px;">0,00</div>
<div class="t" style="top:582.40px;right:1121.30px;">2.680,00</div>
<div class="t" style="top:582.40px;left:774.30px;">N</div>
<div class="t" style="top:582.40px;left:835.40px;">R</div>
<div class="t" style="top:582.40px;left:917.70px;">07/01/2025</div>
<div class="t" style="top:582.40px;left:1064.10px;">202501</div>
<div class="t" style="top:582.40px;left:1156.80px;">RES</div>
<div class="t" style="top:582.40px;left:1249.20px;">01</div>
<div class="t" style="top:582.40px;left:1363.10px;">07/01/2025</div>
<div class="t" style="top:582.40px;left:1498.40px;">1.01.02</div>
<div class="t" style="top:619.90px;left:12.10px;">417</div>
<div class="t" style="top:619.90px;left:157.90px;">INSS 0064</div>
<div class="t" style="top:619.90px;left:389.20px;">Valor</div>
<div class="t" style="top:619.90px;right:1288.80px;">0,00</div>
<div class="t" style="top:619.90px;right:1121.30px;">323,35</div>
<div class="t" style="top:619.90px;left:774.30px;">N</div>
<div class="t" style="top:619.90px;left:835.40px;">R</div>
<div class="t" style="top:619.90px;left:917.70px;">07/01/2025</div>
<div class="t" style="top:619.90px;left:1064.10px;">202501</div>
<div class="t" style="top:619.90px;left:1156.80px;">RES</div>
<div class="t" style="top:619.90px;left:1249.20px;">01</div>
<div class="t" style="top:619.90px;left:1363.10px;">07/01/2025</div>
<div class="t" style="top:619.90px;left:1498.40px;">1.01.02</div>
<div class="t" style="top:657.40px;left:12.10px;">420</div>
<div class="t" style="top:657.40px;left:157.90px;">IRRF FERIAS 0067</div>
<div class="t" style="top:657.40px;left:389.20px;">Valor</div>
<div class="t" style="top:657.40px;right:1288.80px;">7,50</div>
<div class="t" style="top:657.40px;right:1121.30px;">11,53</div>
<div class="t" style="top:657.40px;left:774.30px;">N</div>
<div class="t" style="top:657.40px;left:835.40px;">R</div>
<div class="t" style="top:657.40px;left:917.70px;">07/01/2025</div>
<div class="t" style="top:657.40px;left:1064.10px;">202501</div>
<div class="t" style="top:657.40px;left:1156.80px;">RES</div>
<div class="t" style="top:657.40px;left:1249.20px;">01</div>
<div class="t" style="top:657.40px;left:1363.10px;">07/01/2025</div>
<div class="t" style="top:657.40px;left:1498.40px;">1.01.02</div>
<div class="t" style="top:694.90px;left:12.10px;">706</div>
<div class="t" style="top:694.90px;left:157.90px;">BASE IRRF FERIAS 016</div>
<div class="t" style="top:694.90px;left:389.20px;">Valor</div>
<div class="t" style="top:694.90px;right:1288.80px;">0,00</div>
<div class="t" style="top:694.90px;right:1121.30px;">2.977,77</div>
<div class="t" style="top:694.90px;left:774.30px;">N</div>
<div class="t" style="top:694.90px;left:835.40px;">R</div>
<div class="t" style="top:694.90px;left:917.70px;">07/01/2025</div>
<div class="t" style="top:694.90px;left:1064.10px;">202501</div>
<div class="t" style="top:694.90px;left:1156.80px;">RES</div>
<div class="t" style="top:694.90px;left:1249.20px;">01</div>
<div class="t" style="top:694.90px;left:1363.10px;">07/01/2025</div>
<div class="t" style="top:694.90px;left:1498.40px;">1.01.02</div>
<div class="t" style="top:732.40px;left:12.10px;">419</div>
<div class="t" style="top:732.40px;left:157.90px;">IRRF 0066</div>
<div class="t" style="top:732.40px;left:389.20px;">Valor</div>
<div class="t" style="top:732.40px;right:1288.80px;">7,50</div>
<div class="t" style="top:732.40px;right:1121.30px;">34,58</div>
<div class="t" style="top:732.40px;left:774.30px;">N</div>
<div class="t" style="top:732.40px;left:835.40px;">R</div>
<div class="t" style="top:732.40px;left:917.70px;">07/01/2025</div>
<div class="t" style="top:732.40px;left:1064.10px;">202501</div>
<div class="t" style="top:732.40px;left:1156.80px;">RES</div>
<div class="t" style="top:732.40px;left:1249.20px;">01</div>
<div class="t" style="top:732.40px;left:1363.10px;">07/01/2025</div>
<div class="t" style="top:732.40px;left:1498.40px;">1.01.02</div>
<div class="t" style="top:769.90px;left:12.10px;">423</div>
<div class="t" style="top:769.90px;left:157.90px;">INSS 13º SALAR 0070</div>
<div class="t" style="top:769.90px;left:389.20px;">Valor</div>
<div class="t" style="top:769.90px;right:1288.80px;">0,00</div>
<div class="t" style="top:769.90px;right:1121.30px;">16,74</div>
<div class="t" style="top:769.90px;left:776.60px;">N</div>
<div class="t" style="top:769.90px;left:835.40px;">R</div>
<div class="t" style="top:769.90px;left:917.70px;">07/01/2025</div>
<div class="t" style="top:769.90px;left:1064.10px;">202501</div>
<div class="t" style="top:769.90px;left:1156.80px;">RES</div>
<div class="t" style="top:769.90px;left:1249.20px;">01</div>
<div class="t" style="top:769.90px;left:1363.10px;">07/01/2025</div>
<div class="t" style="top:769.90px;left:1498.40px;">1.01.02</div>
<div style="position:absolute;left:1886.80px;top:424.00px;width:1.20px;height:394.00px;box-sizing:border-box;background:#999"></div>
<div style="position:absolute;left:8.40px;top:796.80px;width:1878.40px;height:20.20px;box-sizing:border-box;background:#f1f1f1"></div>
<div style="position:absolute;left:8.40px;top:796.80px;width:1878.40px;height:1.20px;box-sizing:border-box;background:#c9c9c9"></div>
<div style="position:absolute;left:28.60px;top:796.80px;width:1837.20px;height:1.30px;box-sizing:border-box;background:#0d5f95"></div>
<svg width="8" height="12" style="position:absolute;left:14.6px;top:802.4px"><path d="M6.6 0 L6.6 11.2 L0 5.6 Z" fill="#a3a3a3"/></svg>
<svg width="8" height="12" style="position:absolute;left:1872.8px;top:802.2px"><path d="M0 0 L0 11.2 L7 5.6 Z" fill="#a3a3a3"/></svg>
<div style="position:absolute;left:33.00px;top:801.70px;width:879.00px;height:12.30px;box-sizing:border-box;background:#6ac1f9;border-radius:6.2px"></div>
</body></html>
